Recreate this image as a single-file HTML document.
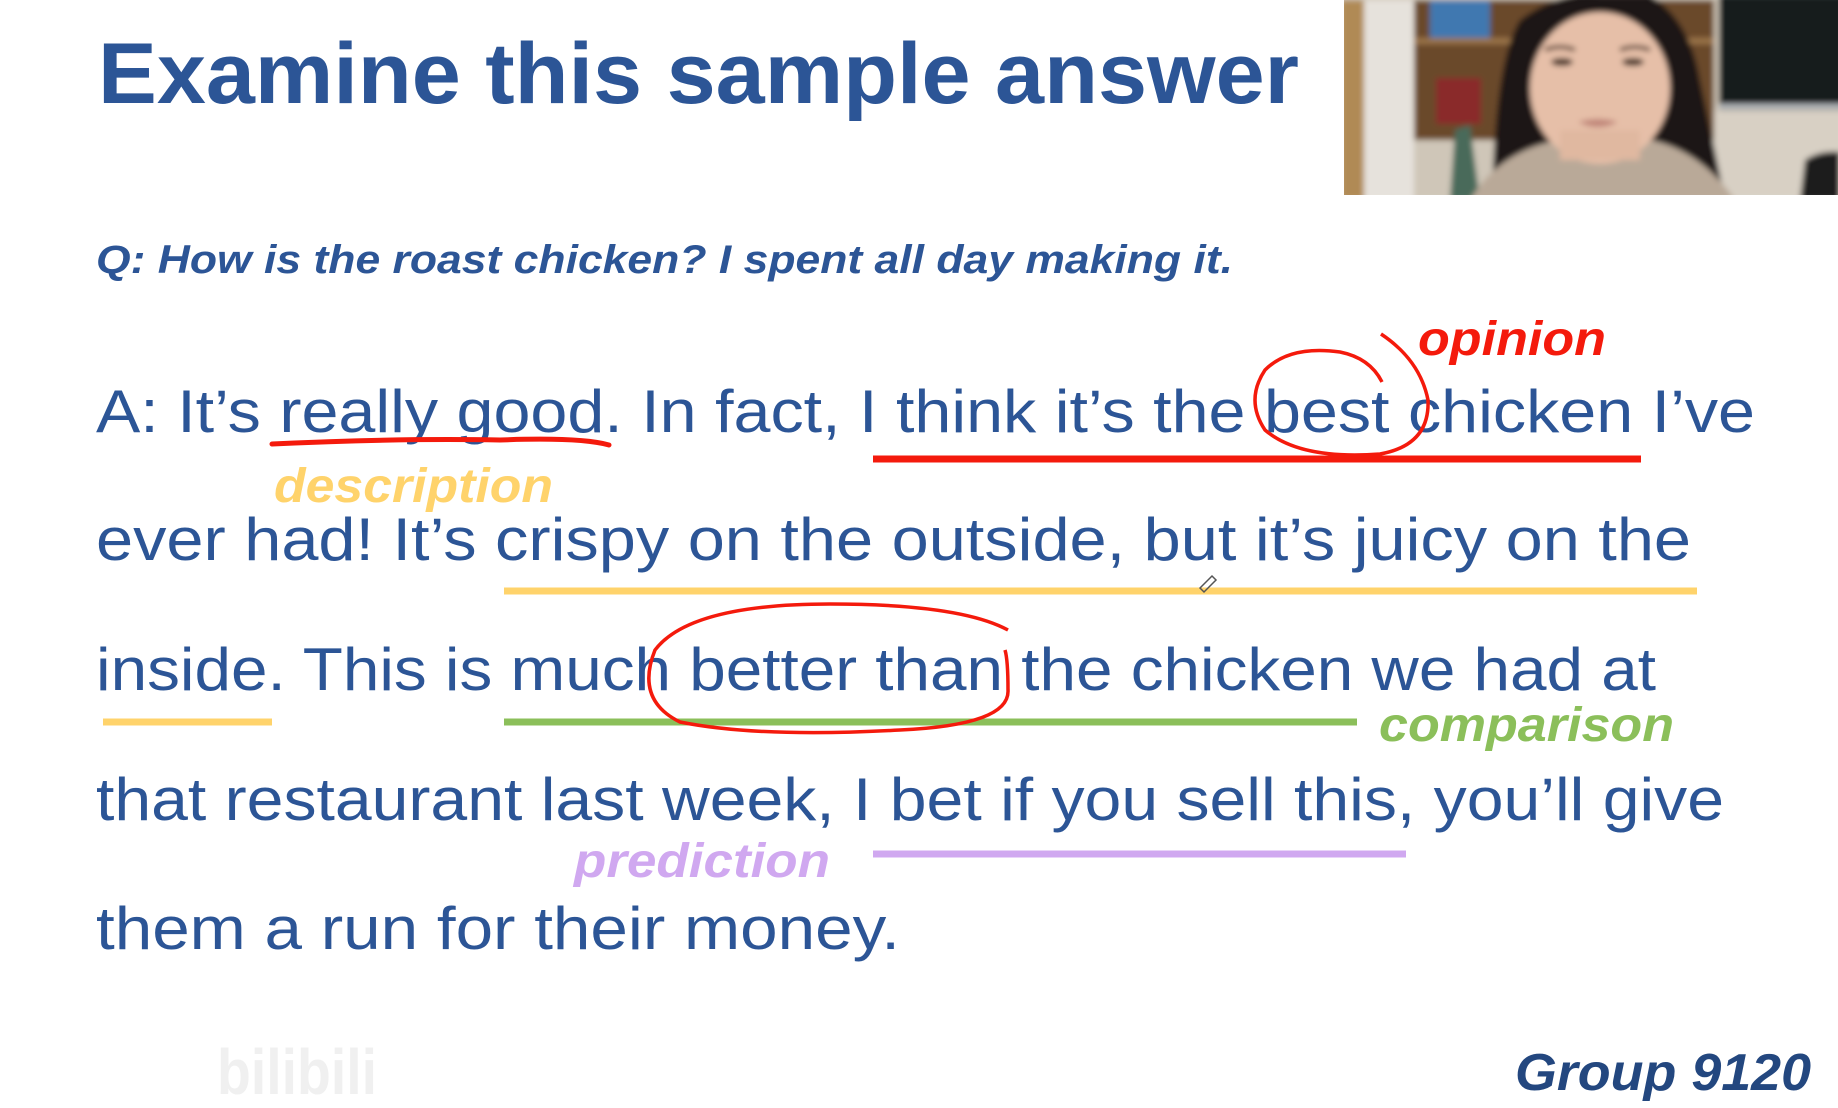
<!DOCTYPE html>
<html><head><meta charset="utf-8"><style>
html,body{margin:0;padding:0;background:#fff;width:1838px;height:1108px;overflow:hidden}
svg{display:block}
</style></head><body>
<svg width="1838" height="1108" viewBox="0 0 1838 1108" xmlns="http://www.w3.org/2000/svg" font-family="Liberation Sans, sans-serif">
<defs><filter id="bl"><feGaussianBlur stdDeviation="3"/></filter><clipPath id="vc"><rect x="1344" y="0" width="494" height="195"/></clipPath></defs>
<rect width="1838" height="1108" fill="#fff"/>
<!-- video -->
<g clip-path="url(#vc)"><g filter="url(#bl)">
<rect x="1340" y="-5" width="500" height="205" fill="#cfc6b8"/>
<rect x="1340" y="0" width="24" height="200" fill="#b08a55"/>
<rect x="1364" y="0" width="50" height="200" fill="#e6e2dc"/>
<rect x="1414" y="0" width="300" height="140" fill="#6b4a2c"/>
<rect x="1430" y="0" width="60" height="38" fill="#3f78b0"/>
<rect x="1436" y="78" width="45" height="46" fill="#8a2a2a"/>
<rect x="1414" y="38" width="300" height="6" fill="#9b7448"/>
<rect x="1719" y="-5" width="125" height="115" fill="#141a1e"/>
<rect x="1719" y="104" width="125" height="5" fill="#b8bcc0"/>
<rect x="1714" y="110" width="130" height="90" fill="#d8d0c4"/>
<path d="M1800 200 L1805 160 Q1820 150 1840 152 L1840 200Z" fill="#1a1a1a"/>
<path d="M1450 200 L1455 130 L1470 125 L1480 200Z" fill="#4a6a5a"/>
<path d="M1492 200 Q1495 60 1520 20 Q1560 -10 1600 -5 L1650 -5 Q1690 20 1700 80 Q1715 150 1725 200Z" fill="#1c1714"/>
<path d="M1470 200 Q1500 150 1560 140 L1650 140 Q1700 150 1735 200Z" fill="#b9a998"/>
<ellipse cx="1600" cy="88" rx="70" ry="76" fill="#e6bfa8"/>
<rect x="1560" y="130" width="80" height="30" fill="#e0b8a0"/>
<path d="M1545 50 Q1560 44 1575 50" stroke="#5a4030" stroke-width="4" fill="none"/>
<path d="M1620 50 Q1635 44 1650 50" stroke="#5a4030" stroke-width="4" fill="none"/>
<ellipse cx="1562" cy="62" rx="11" ry="4" fill="#4a3428"/>
<ellipse cx="1633" cy="62" rx="11" ry="4" fill="#4a3428"/>
<path d="M1578 122 Q1598 116 1618 122 Q1598 132 1578 122Z" fill="#c08478"/>
</g></g>
<!-- title -->
<text x="98" y="103" font-size="86" font-weight="bold" fill="#2c5596" textLength="1201" lengthAdjust="spacingAndGlyphs">Examine this sample answer</text>
<text x="96" y="273" font-size="40" font-weight="bold" font-style="italic" fill="#2c5596" textLength="1137" lengthAdjust="spacingAndGlyphs">Q:  How is the roast chicken? I spent all day making it.</text>
<!-- body -->
<g font-size="60" fill="#2c5596">
<text x="96" y="432" textLength="1659" lengthAdjust="spacingAndGlyphs">A:  It’s really good. In fact, I think it’s the best chicken I’ve</text>
<text x="96" y="560" textLength="1595" lengthAdjust="spacingAndGlyphs">ever had! It’s crispy on the outside, but it’s juicy on the</text>
<text x="96" y="690" textLength="1560" lengthAdjust="spacingAndGlyphs">inside. This is much better than the chicken we had at</text>
<text x="96" y="820" textLength="1628" lengthAdjust="spacingAndGlyphs">that restaurant last week, I bet if you sell this, you’ll give</text>
<text x="96" y="949" textLength="804" lengthAdjust="spacingAndGlyphs">them a run for their money.</text>
</g>
<!-- annotations -->
<path d="M272 444 Q400 438 500 440 Q580 437 609 445" stroke="#f41a0c" stroke-width="5" fill="none" stroke-linecap="round"/>
<line x1="873" y1="459" x2="1641" y2="459" stroke="#f41a0c" stroke-width="7"/>
<path d="M1381 334 Q1420 360 1428 400 Q1430 445 1380 454 Q1300 460 1265 430 Q1245 400 1265 370 Q1290 345 1340 352 Q1370 358 1382 382" stroke="#f41a0c" stroke-width="3.5" fill="none"/>
<text x="1418" y="355" font-size="48" font-weight="bold" font-style="italic" fill="#f41a0c" textLength="188" lengthAdjust="spacingAndGlyphs">opinion</text>
<text x="274" y="502" font-size="48" font-weight="bold" font-style="italic" fill="#ffd36b" textLength="279" lengthAdjust="spacingAndGlyphs">description</text>
<line x1="504" y1="591" x2="1697" y2="591" stroke="#ffd36b" stroke-width="7"/>
<line x1="103" y1="722" x2="272" y2="722" stroke="#ffd36b" stroke-width="7"/>
<line x1="504" y1="722" x2="1357" y2="722" stroke="#8bbf5a" stroke-width="7"/>
<path d="M1008 630 Q960 604 830 604 Q690 604 655 650 Q635 700 680 722 Q760 738 900 730 Q1010 725 1008 690 Q1008 660 1005 650" stroke="#f41a0c" stroke-width="3.5" fill="none"/>
<text x="1379" y="741" font-size="48" font-weight="bold" font-style="italic" fill="#8bbf5a" textLength="295" lengthAdjust="spacingAndGlyphs">comparison</text>
<line x1="873" y1="854" x2="1406" y2="854" stroke="#d0a8f0" stroke-width="7"/>
<text x="574" y="877" font-size="48" font-weight="bold" font-style="italic" fill="#d0a8f0" textLength="256" lengthAdjust="spacingAndGlyphs">prediction</text>
<text x="1515" y="1090" font-size="52" font-weight="bold" font-style="italic" fill="#23477f" textLength="296" lengthAdjust="spacingAndGlyphs">Group 9120</text>
<text x="217" y="1094" font-size="64" font-weight="bold" fill="#f0f0f0" textLength="160" lengthAdjust="spacingAndGlyphs">bilibili</text>
<path d="M1200 588 L1212 576 L1216 580 L1204 592Z" stroke="#555" stroke-width="1.5" fill="none"/>
</svg>
</body></html>
